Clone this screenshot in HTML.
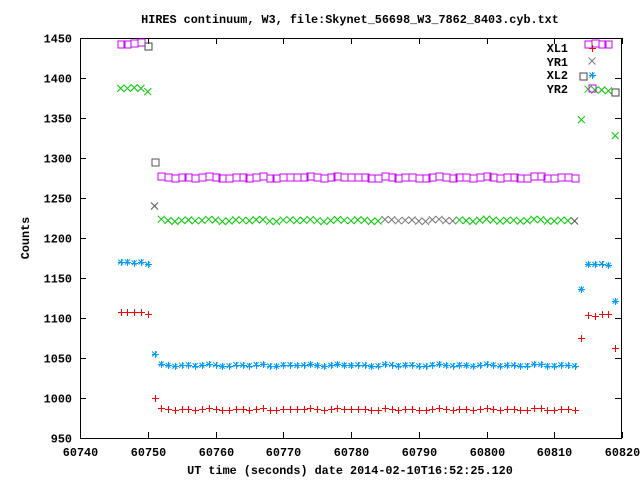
<!DOCTYPE html>
<html><head><style>
html,body{margin:0;padding:0;background:#fff;width:640px;height:480px;overflow:hidden}
text{font-family:"Liberation Mono",monospace;font-weight:bold;font-size:11.8px;fill:#000}
</style></head><body>
<svg id="s" width="640" height="480" xmlns="http://www.w3.org/2000/svg">
<text x="350" y="23" text-anchor="middle">HIRES continuum, W3, file:Skynet_56698_W3_7862_8403.cyb.txt</text>
<text x="350" y="474" text-anchor="middle">UT time (seconds) date 2014-02-10T16:52:25.120</text>
<text transform="translate(29,238) rotate(-90)" text-anchor="middle">Counts</text>
<rect x="80.5" y="38.5" width="541" height="400" fill="none" stroke="#000" stroke-width="1"/>
<g id="ax"></g>
<g id="pts" fill="none" stroke-width="1"></g>
<text x="568" y="52" text-anchor="end">XL1</text>
<text x="568" y="66" text-anchor="end">YR1</text>
<text x="568" y="79" text-anchor="end">XL2</text>
<text x="568" y="93" text-anchor="end">YR2</text>
</svg>
<script>
var NS="http://www.w3.org/2000/svg",s=document.getElementById('s'),ax=document.getElementById('ax'),P=document.getElementById('pts');
function el(p,t,a,txt){var e=document.createElementNS(NS,t);for(var k in a)e.setAttribute(k,a[k]);if(txt)e.textContent=txt;p.appendChild(e);return e;}
function X(t){return 80+(t-60740)*6.775}
function Y(v){return 438-(v-950)*0.8}
for(var v=950;v<=1450;v+=50){var y=Math.round(Y(v))+.5;
 el(ax,'path',{d:'M80 '+y+'h6M621 '+y+'h-6',stroke:'#000'});
 el(s,'text',{x:72,y:y+4,'text-anchor':'end'},''+v);}
for(var t=60740;t<=60820;t+=10){var x=Math.round(X(t))+.5;
 el(ax,'path',{d:'M'+x+' 438v-6M'+x+' 38v6',stroke:'#000'});
 el(s,'text',{x:x,y:456,'text-anchor':'middle'},''+t);}
function plus(x,y,c){x=Math.round(x)+.5;y=Math.round(y)+.5;el(P,'path',{d:'M'+(x-3.5)+' '+y+'h7M'+x+' '+(y-3.5)+'v7',stroke:c})}
function cross(x,y,c){el(P,'path',{d:'M'+(x-3.5)+' '+(y-3.5)+'l7 7M'+(x-3.5)+' '+(y+3.5)+'l7 -7',stroke:c})}
function star(x,y,c){plus(x,y,c);el(P,'path',{d:'M'+(x-2.5)+' '+(y-2.5)+'l5 5M'+(x-2.5)+' '+(y+2.5)+'l5 -5',stroke:c})}
function box(x,y,c){x=Math.round(x)+.5;y=Math.round(y)+.5;el(P,'rect',{x:x-3.5,y:y-3.5,width:7,height:7,stroke:c})}
function jit(i,a){return Math.sin(i*1.7)*a+Math.cos(i*0.9)*a*0.6}
var L=[60746,60747,60748,60749,60750],R=[60815,60816,60817,60818];
var sets=[
 {f:plus,c:'#f00',l:[1108,1107,1108,1108,1105],t1:1000,p:986,t2:1075,r:[1104,1103,1105,1105],e:1062},
 {f:cross,c:'#0c0',l:[1387,1387,1388,1387,1383],t1:1240,p:1222,t2:1348,r:[1386,1385,1385,1384],e:1328},
 {f:star,c:'#09f',l:[1170,1170,1169,1170,1167],t1:1055,p:1041,t2:1136,r:[1167,1167,1168,1166],e:1121},
 {f:box,c:'#c0f',l:[1443,1443,1444,1445,1440],t1:1295,p:1276,t2:null,r:[1443,1444,1442,1442],e:1383}];
sets.forEach(function(d,k){
 L.forEach(function(t,i){d.f(X(t),Y(d.l[i]),(k==3&&i==4)?'#444':d.c)});
 d.f(X(60751),Y(d.t1),(k==1||k==3)?'#555':d.c);
 for(var t=60752;t<=60813;t++){var c=d.c;if(k==1&&t>=60785&&t<=60795)c='#777';if(k==1&&t==60813)c='#555';d.f(X(t),Y(d.p+jit(t,1)),c)}
 if(d.t2)d.f(X(60814),Y(d.t2),d.c);
 R.forEach(function(t,i){d.f(X(t),Y(d.r[i]),d.c)});
 d.f(X(60819),Y(d.e),k==3?'#444':d.c);
});
plus(592,48,'#f00');cross(592,61,'#777');star(592,75,'#09f');box(592,88,'#c0f');box(583,76,'#444');
</script>
</body></html>
